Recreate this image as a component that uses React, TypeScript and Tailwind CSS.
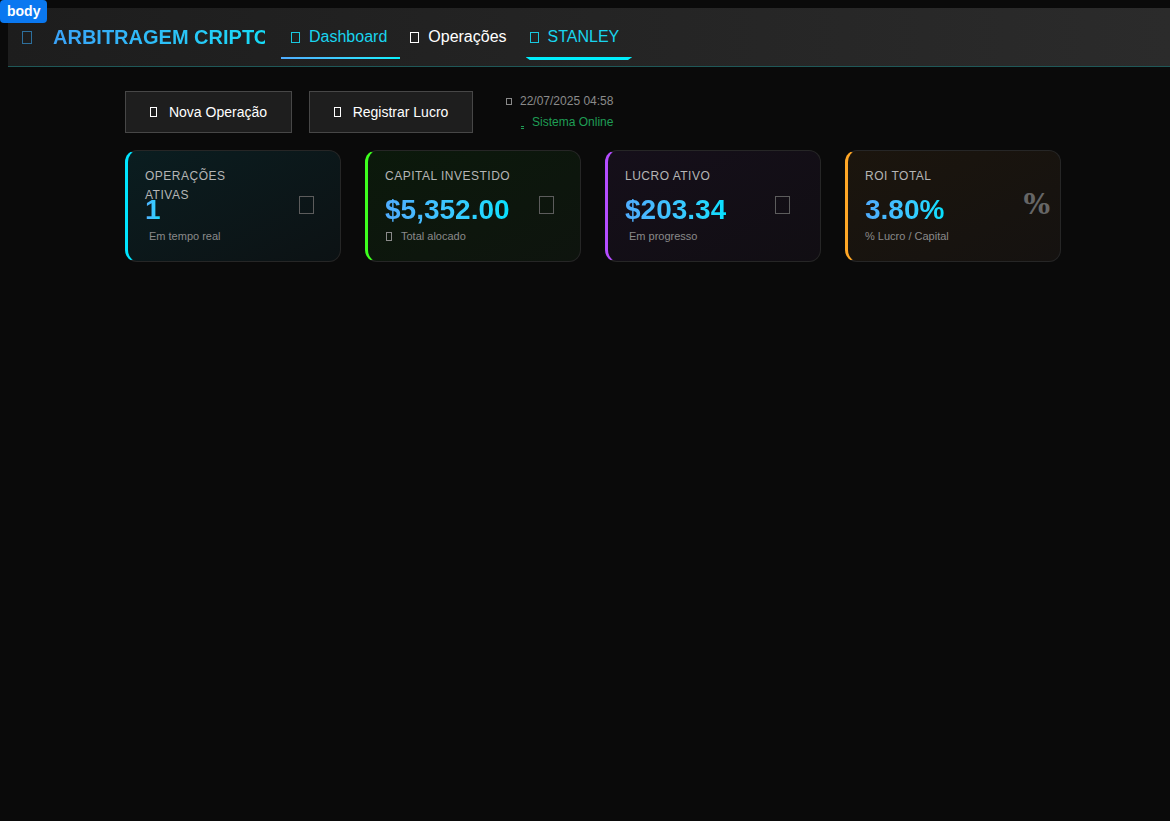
import React from "react";

function Tofu({ cls }: { cls: string }) {
  return <span className={"inline-block box-border border " + cls} />;
}

function Card({
  label,
  value,
  sub,
  subIcon,
  subIndent,
  accent,
  bg,
  icon,
}: {
  label: React.ReactNode;
  value: string;
  sub: string;
  subIcon?: React.ReactNode;
  subIndent?: boolean;
  accent: string;
  bg: string;
  icon: React.ReactNode;
}) {
  return (
    <div
      className={
        "relative w-[216px] h-[112px] box-border rounded-[12px] border border-[#262626] border-l-[3px] pt-[16px] pl-[17px] pr-[20px] " +
        accent +
        " " +
        bg
      }
    >
      <div className="h-[20px] whitespace-nowrap text-[12px] leading-[19px] tracking-[0.5px] text-[#b5b5b5] uppercase">
        {label}
      </div>
      <div className="mt-[6px] text-[28px] leading-[34px] font-bold bg-gradient-to-r from-[#4facfe] to-[#00e0ff] bg-clip-text text-transparent w-fit">
        {value}
      </div>
      <div
        className={
          "mt-[2px] flex items-center text-[11px] leading-[14px] text-[#8a8a8a] " +
          (subIndent ? "pl-[4px]" : "")
        }
      >
        {subIcon}
        {sub}
      </div>
      {icon}
    </div>
  );
}

export default function App() {
  return (
    <div
      className="relative min-h-[821px] w-[1170px] overflow-hidden bg-[#0a0a0a] pt-[8px]"
      style={{ fontFamily: '"Liberation Sans", Arial, sans-serif' }}
    >
      <div className="absolute left-0 top-0 z-10 rounded-[4px] bg-[#0a78f0] px-[7px] text-[14px] leading-[23px] font-bold text-white">
        body
      </div>

      {/* Header */}
      <div className="ml-[8px] flex h-[59px] w-[1162px] items-center border-b border-[#1f5858] bg-gradient-to-r from-[#1d1d1d] to-[#2b2b2b]">
        <div className="flex items-center pl-[14px]">
          <Tofu cls="w-[10px] h-[13px] border-[#2d6f9c] mr-[21px]" />
          <div className="w-[212px] overflow-hidden whitespace-nowrap text-[20px] leading-[24px] font-bold">
            <span className="bg-gradient-to-r from-[#3aa2f8] to-[#14dcf6] bg-clip-text text-transparent">
              ARBITRAGEM CRIPTO
            </span>
          </div>
        </div>
        <div className="ml-[16px] flex h-full items-stretch text-[16px]">
          <div className="relative flex items-center pl-[10px] pr-[13px] text-[#19d4ee]">
            <Tofu cls="w-[9px] h-[11px] border-[#19c8e0] mr-[9px]" />
            Dashboard
            <div className="absolute bottom-[7px] left-0 right-0 h-[2px] bg-gradient-to-r from-[#4facfe] to-[#00f2fe]" />
          </div>
          <div className="flex items-center pl-[10px] pr-[13px] text-white">
            <Tofu cls="w-[9px] h-[11px] border-white mr-[9px]" />
            Operações
          </div>
          <div className="relative flex items-center pl-[10px] pr-[13px] text-[#19d4ee]">
            <Tofu cls="w-[9px] h-[11px] border-[#19c8e0] mr-[9px]" />
            STANLEY
            <div
              className="absolute bottom-[6px] left-[6px] right-0 h-[3px] bg-[#00eefc]"
              style={{ clipPath: "polygon(0 0, 100% 0, 96% 100%, 4% 100%)" }}
            />
          </div>
        </div>
      </div>

      {/* Content */}
      <div className="pl-[125px] pt-[24px]">
        <div className="flex items-center">
          <button className="flex h-[42px] w-[167px] items-center justify-center border border-[#474747] bg-[#1e1e1e] text-[14px] text-white">
            <Tofu cls="w-[7px] h-[10px] border-white mr-[12px]" />
            Nova Operação
          </button>
          <button className="ml-[17px] flex h-[42px] w-[164px] items-center justify-center border border-[#474747] bg-[#1e1e1e] text-[14px] text-white">
            <Tofu cls="w-[7px] h-[10px] border-white mr-[12px]" />
            Registrar Lucro
          </button>
          <div className="ml-[33px] flex flex-col items-end text-[12px] leading-[21px]">
            <div className="flex items-center text-[#8a8a8a]">
              <Tofu cls="w-[6px] h-[7px] border-[#8a8a8a] mr-[8px]" />
              22/07/2025 04:58
            </div>
            <div className="flex items-center text-[#1f9d55]">
              <span className="mr-[8px] mt-[10px] flex flex-col gap-[1px]">
                <span className="block h-[1px] w-[3px] bg-[#1f9d55]" />
                <span className="block h-[1px] w-[3px] bg-[#1f9d55]" />
              </span>
              Sistema Online
            </div>
          </div>
        </div>

        <div className="mt-[17px] flex gap-[24px]">
          <Card
            label={
              <>
                OPERAÇÕES
                <br />
                ATIVAS
              </>
            }
            value="1"
            sub="Em tempo real"
            subIndent
            accent="border-l-[#00e5ff]"
            bg="bg-gradient-to-br from-[#0a1d20] to-[#0c1214]"
            icon={
              <Tofu cls="absolute right-[26px] top-[45px] w-[15px] h-[18px] border-[#5c5c5c]" />
            }
          />
          <Card
            label="CAPITAL INVESTIDO"
            value="$5,352.00"
            sub="Total alocado"
            subIcon={<Tofu cls="w-[6px] h-[9px] border-[#8a8a8a] ml-[1px] mr-[9px]" />}
            accent="border-l-[#3dff1e]"
            bg="bg-gradient-to-br from-[#0b190b] to-[#0e140e]"
            icon={
              <Tofu cls="absolute right-[26px] top-[45px] w-[15px] h-[18px] border-[#5c5c5c]" />
            }
          />
          <Card
            label="LUCRO ATIVO"
            value="$203.34"
            sub="Em progresso"
            subIndent
            accent="border-l-[#b44dff]"
            bg="bg-gradient-to-br from-[#150f1a] to-[#110e13]"
            icon={
              <Tofu cls="absolute right-[30px] top-[45px] w-[15px] h-[18px] border-[#5c5c5c]" />
            }
          />
          <Card
            label="ROI TOTAL"
            value="3.80%"
            sub="% Lucro / Capital"
            accent="border-l-[#ffa726]"
            bg="bg-gradient-to-br from-[#1b150d] to-[#151210]"
            icon={
              <span
                className="absolute right-[10px] top-[34px] text-[28px] leading-[40px] font-bold text-[#666666]"
                style={{ fontFamily: '"DejaVu Serif", serif' }}
              >
                %
              </span>
            }
          />
        </div>
      </div>
    </div>
  );
}
